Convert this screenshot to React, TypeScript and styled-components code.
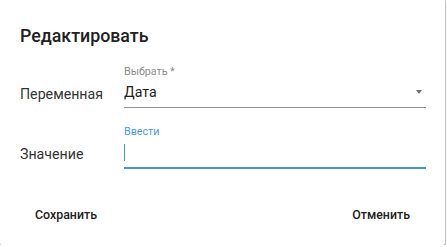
import React from "react";
import styled, { createGlobalStyle } from "styled-components";

const Global = createGlobalStyle`
  html, body { margin: 0; padding: 0; background: #ffffff; }
  body { font-family: Roboto, "Noto Sans", Arial, sans-serif; }
  * { box-sizing: border-box; }
`;

const Dialog = styled.div`
  width: 445px;
  height: 245px;
  background: #fff;
  border-radius: 0 0 2px 2px;
  box-shadow: 0 1px 2px rgba(0, 0, 0, 0.45), 1px 0 1px rgba(0, 0, 0, 0.15);
  padding: 25px 19px 0 20px;
  display: flex;
  flex-direction: column;
`;

const Title = styled.h2`
  margin: 0;
  font-size: 17.8px;
  line-height: 22px;
  font-weight: 500;
  color: #212121;
`;

const Form = styled.div`
  margin-top: 18px;
  display: flex;
  flex-direction: column;
  gap: 16.5px;
`;

const Row = styled.div`
  display: grid;
  grid-template-columns: 104px 1fr;
  align-items: end;
`;

const RowLabel = styled.div`
  font-size: 14.2px;
  line-height: 18px;
  color: #333;
  margin-bottom: 5px;
`;

const Field = styled.div`
  display: flex;
  flex-direction: column;
`;

const FieldLabel = styled.div<{ $focused?: boolean }>`
  font-size: 10.7px;
  line-height: 13px;
  color: ${(p) => (p.$focused ? "#4a9be0" : "#8c8c8c")};
`;

const InputArea = styled.div<{ $focused?: boolean }>`
  height: 30px;
  display: flex;
  align-items: center;
  justify-content: space-between;
  border-bottom: 1px solid ${(p) => (p.$focused ? "#4394dc" : "#949494")};
  box-shadow: ${(p) => (p.$focused ? "0 1px 0 #4394dc" : "none")};
  padding-right: 4px;
`;

const Value = styled.span`
  font-size: 14.2px;
  line-height: 18px;
  color: #212121;
  margin-top: -1px;
`;

const Caret = styled.span`
  width: 1px;
  height: 17px;
  background: #4394dc;
`;

const Arrow = styled.span`
  width: 0;
  height: 0;
  border-left: 3.5px solid transparent;
  border-right: 3.5px solid transparent;
  border-top: 4px solid #707070;
  margin-top: -2px;
`;

const Footer = styled.div`
  margin-top: 32.5px;
  display: flex;
  justify-content: space-between;
  padding: 0 8px 0 7px;
`;

const Button = styled.button`
  border: none;
  background: transparent;
  font-family: Roboto, "Noto Sans", Arial, sans-serif;
  font-size: 12.4px;
  font-weight: 500;
  line-height: 18px;
  color: #212121;
  padding: 6px 8px;
  cursor: pointer;
`;

export default function App() {
  return (
    <>
      <Global />
      <Dialog>
        <Title>Редактировать</Title>
        <Form>
          <Row>
            <RowLabel>Переменная</RowLabel>
            <Field>
              <FieldLabel>Выбрать *</FieldLabel>
              <InputArea>
                <Value>Дата</Value>
                <Arrow />
              </InputArea>
            </Field>
          </Row>
          <Row>
            <RowLabel>Значение</RowLabel>
            <Field>
              <FieldLabel $focused>Ввести</FieldLabel>
              <InputArea $focused>
                <Caret />
              </InputArea>
            </Field>
          </Row>
        </Form>
        <Footer>
          <Button>Сохранить</Button>
          <Button>Отменить</Button>
        </Footer>
      </Dialog>
    </>
  );
}
